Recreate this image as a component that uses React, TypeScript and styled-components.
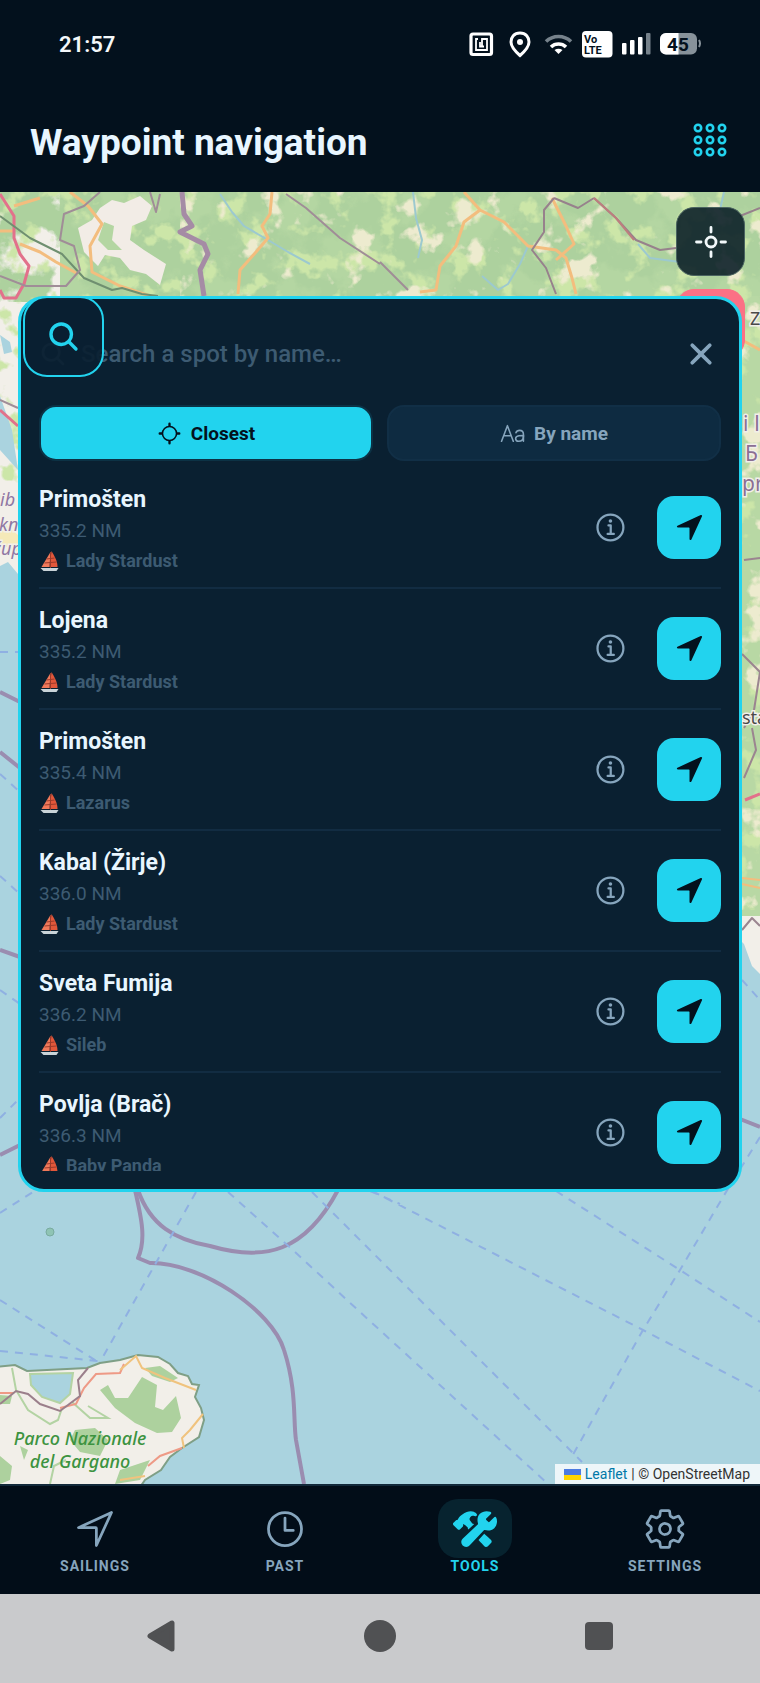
import React, { useState } from 'react';
import styled, { createGlobalStyle } from 'styled-components';
import {
  IoClose,
  IoConstruct,
  IoInformationCircleOutline,
  IoLocateOutline,
  IoNavigate,
  IoNavigateOutline,
  IoSearch,
  IoSettingsOutline,
  IoTextOutline,
  IoTimeOutline,
} from 'react-icons/io5';

interface Spot {
  id: number;
  name: string;
  distance: string;
  boat: string;
}

const spots: Spot[] = [
  { id: 1, name: 'Primošten', distance: '335.2 NM', boat: 'Lady Stardust' },
  { id: 2, name: 'Lojena', distance: '335.2 NM', boat: 'Lady Stardust' },
  { id: 3, name: 'Primošten', distance: '335.4 NM', boat: 'Lazarus' },
  { id: 4, name: 'Kabal (Žirje)', distance: '336.0 NM', boat: 'Lady Stardust' },
  { id: 5, name: 'Sveta Fumija', distance: '336.2 NM', boat: 'Sileb' },
  { id: 6, name: 'Povlja (Brač)', distance: '336.3 NM', boat: 'Baby Panda' },
];

const tabs = [
  { label: 'Sailings', icon: <IoNavigateOutline /> },
  { label: 'Past', icon: <IoTimeOutline /> },
  { label: 'Tools', icon: <IoConstruct /> },
  { label: 'Settings', icon: <IoSettingsOutline /> },
];

const GlobalStyle = createGlobalStyle`
  * {
    box-sizing: border-box;
  }

  body {
    margin: 0;
    font-family: Roboto, 'Noto Sans', sans-serif;
    background: #020d18;
  }

  button, input {
    font-family: inherit;
    margin: 0;
    padding: 0;
    border: none;
    background: none;
  }

  button {
    cursor: pointer;
  }
`;

const Screen = styled.div`
  min-height: 100vh;
  display: flex;
  flex-direction: column;
`;

const StatusBar = styled.div`
  height: 88px;
  padding: 0 59px;
  display: flex;
  align-items: center;
  justify-content: space-between;
  background: #03111d;
  color: #f4f8fa;
  font-size: 22px;
  font-weight: 600;
`;

const StatusIcons = styled.div`
  display: flex;
  align-items: center;

  svg {
    display: block;
  }
`;

const TitleBar = styled.header`
  height: 104px;
  padding: 0 32px 0 30px;
  display: flex;
  align-items: center;
  justify-content: space-between;
  background: #03111d;
`;

const Title = styled.h1`
  margin: 0;
  padding-top: 5px;
  font-size: 37px;
  line-height: 44px;
  font-weight: 700;
  color: #e8f6ff;
`;

const GridButton = styled.button`
  height: 36px;

  svg {
    display: block;
  }
`;

const MapArea = styled.main`
  position: relative;
  flex: 1;
  padding: 104px 18px;
  background: #aad3df;
`;

const MapDrawing = styled.svg`
  position: absolute;
  inset: 0;
  width: 100%;
  height: 100%;
`;

const MapButton = styled.button<{ $top: number; $alert?: boolean }>`
  position: absolute;
  top: ${({ $top }) => $top}px;
  right: 15px;
  width: 69px;
  height: 69px;
  display: grid;
  place-items: center;
  border: 1px solid ${({ $alert }) => ($alert ? '#fb7185' : '#4a6360')};
  border-radius: 18px;
  background: ${({ $alert }) => ($alert ? '#fb7185' : 'rgba(12, 32, 40, 0.9)')};
`;

const SearchToggle = styled.button`
  position: absolute;
  top: 104px;
  left: 23px;
  width: 81px;
  height: 81px;
  display: grid;
  place-items: center;
  border: 2px solid #22d3ee;
  border-radius: 24px;
  background: rgba(10, 32, 49, 0.92);
  color: #22d3ee;
  font-size: 35px;

  svg {
    display: block;
  }
`;

const Panel = styled.section`
  position: relative;
  height: 896px;
  padding: 16px 18px 18px;
  display: flex;
  flex-direction: column;
  border: 3px solid #22d3ee;
  border-radius: 26px;
  background: #0a2031;
`;

const SearchRow = styled.label`
  height: 78px;
  flex: none;
  display: flex;
  align-items: center;
  gap: 14px;
  color: #3d5b72;
  font-size: 28px;
`;

const SearchInput = styled.input`
  flex: 1;
  min-width: 0;
  color: #e8f6ff;
  font-size: 24px;
  font-weight: 500;
  outline: none;

  &::placeholder {
    color: #3d5b72;
    opacity: 1;
  }
`;

const CloseButton = styled.button`
  width: 40px;
  height: 40px;
  color: #86a5bd;
  font-size: 40px;

  svg {
    display: block;
  }
`;

const SortRow = styled.div`
  flex: none;
  margin-top: 12px;
  display: grid;
  grid-template-columns: 1fr 1fr;
  gap: 14px;
`;

const SortButton = styled.button<{ $active: boolean }>`
  height: 56px;
  display: flex;
  align-items: center;
  justify-content: center;
  gap: 9px;
  border: 2px solid ${({ $active }) => ($active ? '#0c3245' : '#112f46')};
  border-radius: 17px;
  background: ${({ $active }) => ($active ? '#22d3ee' : '#0e2b41')};
  color: ${({ $active }) => ($active ? '#03111d' : '#86a5bd')};
  font-size: 19px;
  font-weight: 700;

  svg {
    font-size: 25px;
  }
`;

const SpotList = styled.ul`
  flex: 1;
  min-height: 0;
  margin: 7px 0 0;
  padding: 0;
  list-style: none;
  overflow: hidden;
`;

const SpotRow = styled.li`
  height: 121px;
  display: flex;
  align-items: center;
  border-bottom: 2px solid #122c42;
`;

const SpotText = styled.div`
  flex: 1;
  min-width: 0;
  padding-top: 4px;
`;

const SpotName = styled.div`
  font-size: 23px;
  line-height: 32px;
  font-weight: 700;
  color: #e8f6ff;
`;

const SpotDistance = styled.div`
  font-size: 19px;
  line-height: 30px;
  color: #3d5b72;
`;

const SpotBoat = styled.div`
  display: flex;
  align-items: center;
  gap: 6px;
  font-size: 18px;
  line-height: 30px;
  font-weight: 700;
  color: #3d5b72;
`;

const InfoButton = styled.button`
  margin-right: 28px;
  color: #86a5bd;
  font-size: 36px;

  svg {
    display: block;
  }
`;

const GoButton = styled.button`
  width: 64px;
  height: 63px;
  display: grid;
  place-items: center;
  border-radius: 17px;
  background: #22d3ee;
  color: #03111d;
  font-size: 31px;
`;

const Attribution = styled.div`
  position: absolute;
  right: 0;
  bottom: 0;
  height: 20px;
  padding: 0 10px 0 9px;
  display: flex;
  align-items: center;
  gap: 4px;
  background: rgba(255, 255, 255, 0.8);
  color: #333;
  font-size: 14px;
  line-height: 20px;

  a {
    color: #0078a8;
    text-decoration: none;
  }
`;

const TabBar = styled.nav`
  height: 110px;
  padding-top: 13px;
  display: grid;
  grid-template-columns: repeat(4, 1fr);
  align-items: start;
  border-top: 2px solid #12293a;
  background: #020d18;
`;

const TabButton = styled.button<{ $active: boolean }>`
  display: flex;
  flex-direction: column;
  align-items: center;
  color: ${({ $active }) => ($active ? '#22d3ee' : '#86a5bd')};
  font-size: 14px;
  line-height: 16px;
  font-weight: 700;
  letter-spacing: 1px;
  text-transform: uppercase;
`;

const TabIcon = styled.span<{ $active: boolean }>`
  width: 74px;
  height: 59px;
  display: grid;
  place-items: center;
  border-radius: 20px;
  background: ${({ $active }) => ($active ? '#07232f' : 'transparent')};
  font-size: 44px;
`;

const SystemBar = styled.div`
  height: 89px;
  padding: 0 52px 6px;
  display: grid;
  grid-template-columns: repeat(3, 1fr);
  align-items: center;
  justify-items: center;
  background: #c9cacc;

  svg {
    display: block;
  }
`;

const BoatIcon: React.FC = () => (
  <svg width="21" height="22" viewBox="0 0 20 22" aria-hidden="true">
    <path d="M11 2 L2 17 L10 17 Z" fill="#f0795a" />
    <path d="M12 1 C15 6 18 11 18 17 L10 17 Z" fill="#e2573a" />
    <path d="M11 2 V18 M7 9 L15 8 M5 13 L17 12" stroke="#9c3a2a" strokeWidth="1" fill="none" />
    <path d="M1 18 H19 L17 21 H4 Z" fill="#c9d3d8" />
  </svg>
);

const StatusGlyphs: React.FC = () => (
  <svg width="234" height="30" viewBox="467 29 234 30" role="img" aria-label="Phone status">
    {/* nfc */}
    <rect x="471" y="34" width="20.500" height="20.500" rx="2" fill="none" stroke="#fff" strokeWidth="3.200" />
    <path d="M478 39 H476 V50 H487 V39 H482 V45.500 M480 42 V46.500 H484" fill="none" stroke="#fff" strokeWidth="1.800" />
    {/* location */}
    <path d="M520 33 C514 33 511 37.500 511 42 C511 47 516 52 520 55.500 C524 52 529 47 529 42 C529 37.500 526 33 520 33 Z" fill="none" stroke="#fff" strokeWidth="3" />
    <circle cx="520" cy="42" r="3" fill="#fff" />
    {/* wifi */}
    <path d="M546 41.500 A18 18 0 0 1 571 41.500" fill="none" stroke="#76828b" strokeWidth="3.600" />
    <path d="M551 47 A11 11 0 0 1 566 47" fill="none" stroke="#fff" strokeWidth="3.600" />
    <path d="M558.500 54 L554.500 50 Q558.500 47.500 562.500 50 Z" fill="#fff" />
    {/* volte */}
    <rect x="582" y="31" width="30.500" height="26.500" rx="4" fill="#fff" />
    <text x="584" y="42.500" fontSize="11" fontWeight="700" fill="#03111d">Vo</text>
    <text x="584" y="54" fontSize="11" fontWeight="700" fill="#03111d">LTE</text>
    {/* signal */}
    <rect x="622" y="43" width="4.500" height="11.500" rx="1" fill="#fff" />
    <rect x="630" y="40" width="4.500" height="14.500" rx="1" fill="#fff" />
    <rect x="638" y="37" width="4.500" height="17.500" rx="1" fill="#fff" />
    <rect x="646" y="33" width="4.500" height="21.500" rx="1" fill="#76828b" />
    {/* battery */}
    <rect x="660" y="33" width="37" height="21.500" rx="6" fill="#87929a" />
    <path d="M678.500 33 H666 A6 6 0 0 0 660 39 V48.500 A6 6 0 0 0 666 54.500 H678.500 Z" fill="#fff" />
    <path d="M699 40 Q701 43.500 699 47" stroke="#87929a" strokeWidth="2" fill="none" />
    <text x="678" y="50.500" fontSize="19" fontWeight="700" textAnchor="middle" fill="#03111d">45</text>
  </svg>
);

const SeaMap: React.FC = () => (
  <MapDrawing viewBox="0 192 760 1292" preserveAspectRatio="xMidYMid slice" aria-hidden="true">
    <defs>
      <filter id="woods" x="0" y="0" width="100%" height="100%" colorInterpolationFilters="sRGB">
        <feTurbulence type="fractalNoise" baseFrequency="0.022" numOctaves="5" seed="7" />
        <feColorMatrix values="0 0 0 0 0.68  0 0 0 0 0.82  0 0 0 0 0.62  10 0 0 0 -4" />
        <feComposite in2="SourceGraphic" operator="in" />
      </filter>
      <filter id="fields" x="0" y="0" width="100%" height="100%" colorInterpolationFilters="sRGB">
        <feTurbulence type="fractalNoise" baseFrequency="0.035" numOctaves="4" seed="21" />
        <feColorMatrix values="0 0 0 0 0.93  0 0 0 0 0.92  0 0 0 0 0.81  0 9 0 0 -5.400" />
        <feComposite in2="SourceGraphic" operator="in" />
      </filter>
      <filter id="meadows" x="0" y="0" width="100%" height="100%" colorInterpolationFilters="sRGB">
        <feTurbulence type="fractalNoise" baseFrequency="0.04" numOctaves="4" seed="4" />
        <feColorMatrix values="0 0 0 0 0.80  0 0 0 0 0.90  0 0 0 0 0.66  0 0 8 0 -4.400" />
        <feComposite in2="SourceGraphic" operator="in" />
      </filter>
    </defs>
    <rect x="0" y="192" width="760" height="1292" fill="#aad3df" />

    {/* mainland */}
    <path d="M0 192 H760 V974 L752 966 L744 944 L700 900 V330 H100 V560 L18 574 L8 562 L0 566 Z" fill="#f2efe9" />
    <rect x="60" y="192" width="700" height="110" fill="#b4d6a2" />
    <rect x="730" y="296" width="30" height="620" fill="#b8d8a4" />
    <rect x="0" y="192" width="760" height="110" filter="url(#woods)" />
    <rect x="0" y="192" width="760" height="110" filter="url(#meadows)" />
    <rect x="180" y="192" width="580" height="110" filter="url(#fields)" />
    <rect x="730" y="300" width="30" height="610" filter="url(#meadows)" />
    <rect x="730" y="300" width="30" height="610" filter="url(#fields)" />
    <rect x="0" y="300" width="30" height="210" filter="url(#meadows)" />
    <path d="M78 228 L92 220 L100 208 L112 200 L124 203 L140 196 L152 206 L146 220 L132 226 L130 240 L144 250 L166 264 L160 285 L146 274 L130 270 L120 258 L105 255 L98 266 L84 252 Z" fill="#f2ece6" />
    <path d="M104 222 L114 226 L112 240 L122 250 L108 250 L98 240 Z" fill="#b4d6a2" />
    <path d="M0 335 L10 342 L12 352 L4 354 Z M0 396 L12 430 L18 470 L0 450 Z" fill="#aad3df" />
    <path d="M0 520 L18 535 L18 552 L0 544 Z" fill="#f5e9b9" />

    <g fill="none" strokeLinejoin="round">
      {/* rivers */}
      <path d="M220 194 L232 212 L244 226 L268 240 L288 252 L310 264 M413 192 L416 218 L422 240 L418 258 M528 246 L520 264 L508 284 L498 290 L482 276 M724 192 L720 210 M638 244 L650 258 L680 262" stroke="#9cc9cf" strokeWidth="2" />
      {/* roads */}
      <path d="M14 206 L40 198 M70 192 L88 206 L102 224 L90 246 L92 272 L120 286 L150 296 M272 192 L270 214 L262 226 L268 238 L256 252 L240 270 L238 294 M0 231 L14 231 M20 244 L40 252 L56 262 L78 274 M464 192 L480 210 L504 222 L528 246 L556 250 L566 258 L572 278 L576 294 M480 210 L464 222 L456 246 L440 266 L436 290 L420 292 M552 198 L566 226 L574 244 L556 260 M742 340 L760 350" stroke="#f3bd7e" strokeWidth="3" />
      <path d="M0 194 L14 216 L14 238 L20 254 L29 266 L24 284 L16 298 L4 298 L0 290 M0 410 L18 426 M745 800 L760 794" stroke="#e2718b" strokeWidth="3" />
      {/* borders */}
      <path d="M0 216 L30 238 L62 254 L84 278 L112 290 L122 288 L142 294 L158 296" stroke="#6f8f70" strokeWidth="2" />
      <path d="M100 192 L84 206 L64 214 L60 240 L74 246 L80 270 L66 286 L26 286 L0 276 M150 192 L156 212 L160 194 M286 194 L306 208 L340 238 L380 264 M380 262 L408 290 M0 400 L18 408" stroke="#a08d97" strokeWidth="2" />
      <path d="M182 192 L184 214 L192 226 L180 232 L204 244 L208 254 L200 270 L204 296" stroke="#a58ba5" strokeWidth="5" />
      <path d="M554 198 L544 210 L544 232 L532 250 L546 268 L556 294 M554 198 L578 208 L594 198 M594 198 L616 218 L636 240 L660 250 L676 248 M740 216 L760 208" stroke="#97818c" strokeWidth="2" />
      <path d="M594 198 L616 218 L634 240" stroke="#bd7e7e" strokeWidth="2" />
      <path d="M744 560 L760 558 M742 654 L760 672 L754 710 L744 728 M752 728 L756 750 L744 778 M742 930 L752 918 L760 926" stroke="#9b8590" strokeWidth="2" />
      <path d="M742 878 L760 880 M742 884 L760 888" stroke="#f3bd7e" strokeWidth="2" />
      {/* territorial waters */}
      <path d="M0 692 L20 702 M0 752 L20 768 M0 950 L20 957 M0 1155 L20 1145 M740 1119 L760 1127" stroke="#9a8db0" strokeWidth="4" />
      <path d="M135 1190 C142 1220 146 1240 138 1258 L150 1263 C200 1262 272 1310 284 1350 C297 1390 293 1420 296 1440 L304 1484" stroke="#9a8db0" strokeWidth="4" />
      <path d="M138 1190 C150 1225 175 1240 210 1246 C265 1262 305 1252 338 1190" stroke="#9a8db0" strokeWidth="4" />
      {/* ferry lines */}
      <path
        d="M196 1192 L100 1362 M228 1192 L295 1252 L360 1312 L548 1484 M312 1192 L400 1280 L582 1462 M372 1191 L643 1330 L760 1391 M556 1191 L680 1270 L760 1322 M760 1137 L723 1197 L680 1270 L643 1330 L570 1460 M0 1213 L36 1190 M0 1300 L98 1362 M0 1351 L98 1361 M0 1118 L20 1098 M0 652 H20 M0 774 L20 792 M0 876 L20 894 M0 990 L20 1004 M370 1191 L400 1204 M742 980 L760 1000"
        stroke="#8fb0e2"
        strokeWidth="2"
        strokeDasharray="8 7"
      />
    </g>
    <circle cx="50" cy="1232" r="4" fill="#8fc4b4" stroke="#79ab9f" />

    {/* Gargano */}
    <path d="M-6 1367 L15 1365 L27 1371 L87 1368 L100 1363 L120 1360 L138 1355 L158 1357 L170 1364 L178 1373 L188 1376 L192 1384 L199 1385 L195 1397 L201 1408 L204 1420 L199 1437 L182 1448 L170 1457 L161 1470 L145 1480 L138 1490 H-6 Z" fill="#f2efe9" stroke="#7f9f86" strokeWidth="2" />
    <path d="M30 1374 L73 1373 L70 1394 L60 1403 L42 1397 L31 1385 Z" fill="#aad3df" stroke="#b3d3a3" strokeWidth="2" />
    <path d="M100 1390 L108 1385 L115 1398 L128 1398 L142 1377 L157 1385 L155 1407 L163 1410 L176 1396 L181 1418 L172 1432 L157 1433 L135 1423 L115 1408 Z M145 1368 L160 1366 L178 1378 L170 1382 L152 1376 Z M75 1430 L95 1428 L108 1440 L100 1456 L80 1452 L70 1440 Z M0 1395 L12 1396 L10 1404 L0 1404 Z M0 1456 L12 1466 L10 1480 L0 1484 Z M20 1446 L28 1450 L24 1460 Z M120 1470 L150 1460 L140 1480 L115 1484 Z" fill="#add19e" />
    <g fill="none" strokeWidth="2">
      <path d="M12 1368 L16 1390 L28 1410 L50 1424 L58 1420 L62 1408 M72 1402 L90 1418 L108 1418 L88 1406 M50 1484 L54 1466 L66 1460" stroke="#b3d3a3" />
      <path d="M0 1393 H14 M60 1408 L76 1404 L84 1388 L96 1374 L120 1373 L124 1364 M182 1448 L160 1456 L148 1466" stroke="#ee9a86" />
      <path d="M120 1370 L136 1356 L142 1368 L165 1378 L196 1390 M203 1414 L190 1430 L182 1438 L184 1448 M120 1480 L145 1476" stroke="#f0c37e" />
      <path d="M0 1404 L16 1391 L28 1394 L40 1404 L60 1411 L80 1396 L78 1380 L88 1368" stroke="#9b7f8b" />
    </g>

    <g fontFamily="Noto Sans" fontSize="18" fontStyle="italic">
      <g fill="#3c9340" fontWeight="500" textAnchor="middle">
        <text x="80" y="1445">Parco Nazionale</text>
        <text x="80" y="1468">del Gargano</text>
      </g>
      <g fill="#9077a3" stroke="#f2efe9" strokeWidth="3" paintOrder="stroke">
        <text x="0" y="506">ib</text>
        <text x="-1" y="531">kn</text>
        <text x="-7" y="555">žup</text>
      </g>
    </g>
    <g fontFamily="Noto Sans" fontSize="21" fill="#8b6f93" stroke="#f2efe9" strokeWidth="3" paintOrder="stroke">
      <text x="743" y="431">і І</text>
      <text x="745" y="461">Б</text>
      <text x="742" y="491">pr</text>
      <text x="750" y="325" fontSize="18" fill="#4a4a4a">Z</text>
      <text x="742" y="724" fontSize="18" fill="#4a4a4a">sta</text>
    </g>
  </MapDrawing>
);

const App: React.FC = () => {
  const [query, setQuery] = useState('');
  const [sort, setSort] = useState<'closest' | 'name'>('closest');
  const [activeTab, setActiveTab] = useState('Tools');

  const visibleSpots = spots.filter((spot) => spot.name.toLowerCase().includes(query.toLowerCase()));
  if (sort === 'name') {
    visibleSpots.sort((a, b) => a.name.localeCompare(b.name));
  }

  return (
    <Screen>
      <GlobalStyle />
      <StatusBar>
        <span>21:57</span>
        <StatusIcons>
          <StatusGlyphs />
        </StatusIcons>
      </StatusBar>
      <TitleBar>
        <Title>Waypoint navigation</Title>
        <GridButton aria-label="Menu">
          <svg width="36" height="36" viewBox="0 0 36 36" fill="none" stroke="#22d3ee" strokeWidth="2.600">
            {[6, 18, 30].map((y) => [6, 18, 30].map((x) => <circle key={`${x}-${y}`} cx={x} cy={y} r="3.200" />))}
          </svg>
        </GridButton>
      </TitleBar>

      <MapArea>
        <SeaMap />
        <MapButton $top={15} aria-label="Center map">
          <svg width="34" height="34" viewBox="0 0 34 34" fill="none" stroke="#f2f8fa" strokeWidth="2.800" strokeLinecap="round">
            <circle cx="17" cy="17" r="5" />
            <path d="M17 2.500 V7 M17 27 V31.500 M2.500 17 H7 M27 17 H31.500" />
          </svg>
        </MapButton>
        <MapButton $top={97} $alert aria-label="Stop navigation" />

        <Panel>
          <SearchRow>
            <IoSearch />
            <SearchInput
              value={query}
              placeholder="Search a spot by name…"
              aria-label="Search a spot by name"
              onChange={(e) => setQuery(e.target.value)}
            />
            <CloseButton aria-label="Close" onClick={() => setQuery('')}>
              <IoClose />
            </CloseButton>
          </SearchRow>
          <SortRow>
            <SortButton $active={sort === 'closest'} onClick={() => setSort('closest')}>
              <IoLocateOutline />
              Closest
            </SortButton>
            <SortButton $active={sort === 'name'} onClick={() => setSort('name')}>
              <IoTextOutline />
              By name
            </SortButton>
          </SortRow>
          <SpotList>
            {visibleSpots.map((spot) => (
              <SpotRow key={spot.id}>
                <SpotText>
                  <SpotName>{spot.name}</SpotName>
                  <SpotDistance>{spot.distance}</SpotDistance>
                  <SpotBoat>
                    <BoatIcon />
                    {spot.boat}
                  </SpotBoat>
                </SpotText>
                <InfoButton aria-label={`About ${spot.name}`}>
                  <IoInformationCircleOutline />
                </InfoButton>
                <GoButton aria-label={`Navigate to ${spot.name}`}>
                  <IoNavigate />
                </GoButton>
              </SpotRow>
            ))}
          </SpotList>
        </Panel>
        <SearchToggle aria-label="Search">
          <IoSearch />
        </SearchToggle>

        <Attribution>
          <svg width="17" height="11" viewBox="0 0 17 11" aria-hidden="true">
            <path d="M0 0 H17 V6 H0 Z" fill="#4c7be1" />
            <path d="M0 6 H17 V11 H0 Z" fill="#ffd500" />
          </svg>
          <a href="https://leafletjs.com">Leaflet</a>
          <span>| © OpenStreetMap</span>
        </Attribution>
      </MapArea>

      <TabBar>
        {tabs.map((tab) => (
          <TabButton key={tab.label} $active={tab.label === activeTab} onClick={() => setActiveTab(tab.label)}>
            <TabIcon $active={tab.label === activeTab}>{tab.icon}</TabIcon>
            {tab.label}
          </TabButton>
        ))}
      </TabBar>
      <SystemBar>
        <button aria-label="Back">
          <svg width="28" height="32" viewBox="0 0 28 32">
            <path d="M25 3 V29 L3 16 Z" fill="#505153" stroke="#505153" strokeWidth="5" strokeLinejoin="round" />
          </svg>
        </button>
        <button aria-label="Home">
          <svg width="32" height="32" viewBox="0 0 32 32">
            <circle cx="16" cy="16" r="16" fill="#505153" />
          </svg>
        </button>
        <button aria-label="Recents">
          <svg width="28" height="28" viewBox="0 0 28 28">
            <rect width="28" height="28" rx="4" fill="#505153" />
          </svg>
        </button>
      </SystemBar>
    </Screen>
  );
};

export default App;
